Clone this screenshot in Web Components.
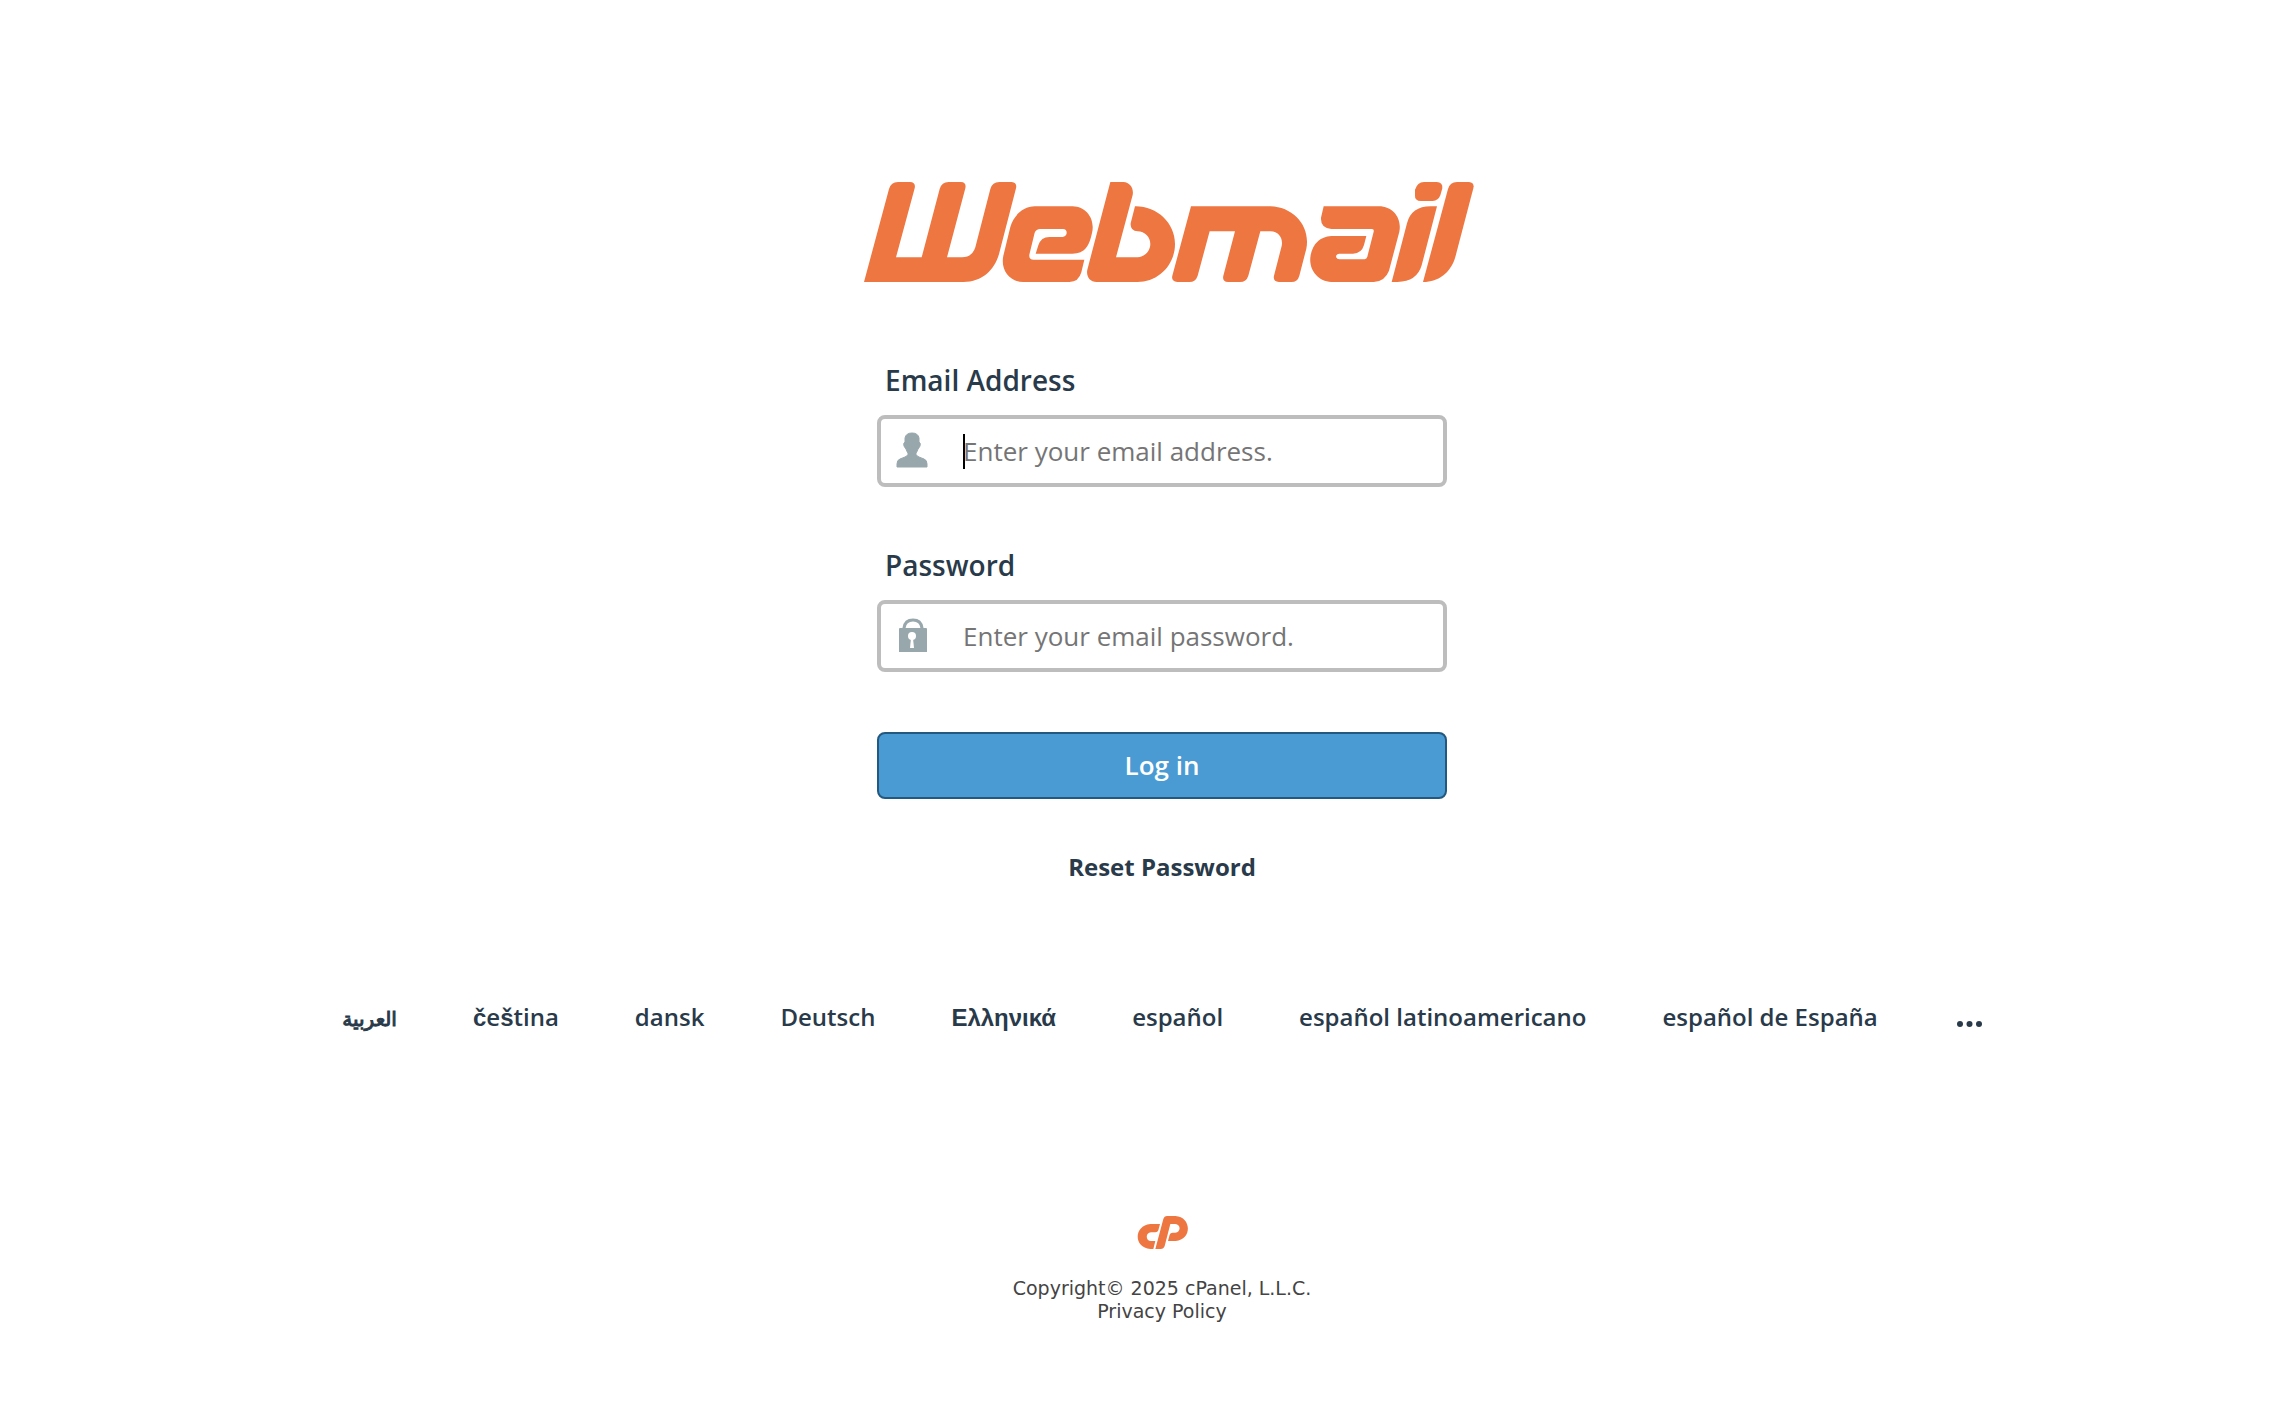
<!DOCTYPE html>
<html lang="en">
<head>
<meta charset="utf-8">
<title>Webmail Login</title>
<style>
body{margin:0;background:#fff;color:#293a4a;font-family:"Open Sans","Liberation Sans",sans-serif}
</style>
</head>
<body>
<webmail-login></webmail-login>
<script>
const define=(name,html,setup)=>customElements.define(name,class extends HTMLElement{
  connectedCallback(){
    if(this.shadowRoot)return;
    this.attachShadow({mode:'open'}).innerHTML=html;
    if(setup)setup(this,this.shadowRoot);
  }
});

define('webmail-logo',`
<style>:host{display:block}svg{display:block;width:610px;height:100px}</style>
<svg viewBox="42 36 1830 300" role="img" aria-label="Webmail" fill="#ee7641">
<path d="M42 336L117 57Q123 36 144 36H180Q198 37 194 55L138 262H215L269 57Q275 36 296 36H333Q350 37 346 55L291 262H336Q367 261 376 232L421 57Q427 36 448 36H485Q502 38 498 55L448 248C436 297 398 336 340 336Z"/>
<path d="M555 109H668C710 110 736 148 726 189C718 226 706 251 667 251H557L565 226Q573 201 598 201H638Q648 200 650 190Q651 178 639 177H570Q559 177 554 188L538 254Q536 269 551 269H703L694 307Q686 336 658 336H520C478 336 451 300 460 257L481 171C491 137 519 109 555 109Z"/>
<path d="M781 36H820C840 37 852 55 848 75L798 262H863C883 261 901 244 901 222C901 201 884 184 863 184Q840 182 842 160L855 109C921 108 975 159 975 222C975 285 925 336 862 336H740C719 336 708 319 712 299Z"/>
<path d="M1023 109H1261C1332 111 1382 170 1369 236L1348 317Q1343 336 1324 336H1287Q1268 335 1272 317L1295 228C1300 205 1286 184 1262 184H1231L1195 317Q1189 336 1170 336H1134Q1116 335 1120 317L1155 184H1079L1043 317Q1037 336 1018 336H982Q963 334 967 317Z"/>
<path d="M1421 109H1587C1629 109 1656 145 1648 185L1617 302Q1605 334 1571 336H1444C1402 334 1374 297 1382 255Q1393 202 1444 198H1549L1542 225Q1535 250 1509 251H1467Q1458 252 1458 261Q1461 268 1468 268H1544Q1550 267 1552 260L1571 185Q1573 178 1566 177H1444Q1411 175 1413 143Z"/>
<path d="M1695 59Q1702 37 1722 36H1760Q1779 37 1777 55L1771 76Q1765 92 1748 93H1713Q1694 92 1695 77Z"/>
<path d="M1761 109L1715 286Q1701 335 1642 336H1625L1671 160Q1684 109 1742 109Z"/>
<path d="M1719 336L1794 57Q1800 36 1821 36H1857Q1874 38 1870 55L1816 261C1803 307 1766 336 1719 336Z"/>
</svg>`);

define('cpanel-mark',`
<style>:host{display:block}svg{display:block;width:52px;height:33px}</style>
<svg viewBox="408 48 156 99" role="img" aria-label="cPanel" fill="#ee7641">
<path d="M451 72H480L475 91Q473 97 466 97H453C436 98 436 122 453 123H466L460 147H451C399 143 402 76 451 72Z"/>
<path d="M466 147L490 57Q493 48 501 48H526C576 51 576 120 527 123H504L509 104Q511 98 518 98H526C543 97 543 73 526 72H511L494 138Q491 147 482 147Z"/>
</svg>`);

define('login-field',`
<style>
:host{display:block}
label{display:block;padding-left:8px;font-size:28px;line-height:36px;font-weight:600}
.box{display:flex;align-items:center;box-sizing:border-box;height:72px;margin-top:17px;border:4px solid #bdbdbd;border-radius:8px;background:#fff}
slot{display:block;flex:none;width:82px}
.caret{display:none;flex:none;width:2px;height:35px;margin-right:-2px;background:#000}
:host([focused]) .caret{display:block}
input{flex:1;min-width:0;height:100%;box-sizing:border-box;border:0;padding:0;outline:0;background:none;font:26px "Open Sans",sans-serif;color:#000;caret-color:transparent}
input::placeholder{color:#757575;opacity:1}
</style>
<label for="field"></label>
<div class="box"><slot></slot><span class="caret"></span><input id="field"></div>`,(host,root)=>{
  root.querySelector('label').textContent=host.getAttribute('label');
  const input=root.querySelector('input');
  input.type=host.getAttribute('type');
  input.placeholder=host.getAttribute('placeholder');
  input.addEventListener('input',()=>{input.style.caretColor='#000';host.removeAttribute('focused')});
  if(host.hasAttribute('focused'))input.focus();
});

define('language-list',`
<style>
:host{display:block}
ul{display:flex;justify-content:center;align-items:center;gap:76px;list-style:none;margin:0;padding:0;white-space:nowrap}
a,button{color:inherit;text-decoration:none;font-size:24px;line-height:34px;font-weight:600}
a{display:block;height:34px}
b{font-family:"Liberation Sans",sans-serif;font-weight:700}
.ar{font-family:"DejaVu Sans",sans-serif;font-weight:400;font-size:20px;-webkit-text-stroke:1px currentColor}
button{display:block;border:0;background:none;padding:0;height:34px}
svg{display:block;width:28px;height:34px}
</style>
<ul>
<li><a href="#" lang="ar"><span class="ar">العربية</span></a></li>
<li><a href="#"><b>č</b>e<b>š</b>tina</a></li>
<li><a href="#">dansk</a></li>
<li><a href="#">Deutsch</a></li>
<li><a href="#"><b>Ελληνικά</b></a></li>
<li><a href="#">español</a></li>
<li><a href="#">español latinoamericano</a></li>
<li><a href="#">español de España</a></li>
<li><button type="button" aria-label="More languages"><svg viewBox="0 0 28 34" fill="currentColor"><circle cx="6" cy="24" r="3"/><circle cx="15.500" cy="24" r="3"/><circle cx="25" cy="24" r="3"/></svg></button></li>
</ul>`);

define('webmail-login',`
<style>
:host{display:block;box-sizing:border-box;padding:182px 0 80px 52px}
main{width:570px;margin:0 auto}
webmail-logo{margin-left:-13px;margin-bottom:80px}
login-field{margin-bottom:60px}
login-field svg{display:block;width:32px;height:40px;margin-left:15px}
.login{display:block;width:100%;height:67px;box-sizing:border-box;padding:0 0 2px;border:2px solid #23587f;border-radius:8px;background:#4a9ad3;color:#fff;font:600 26px "Open Sans",sans-serif}
.reset{display:block;margin-top:51px;text-align:center;color:inherit;text-decoration:none;font-size:24px;line-height:34px;font-weight:700}
language-list{margin-top:116px}
footer{display:flex;flex-direction:column;align-items:center;margin-top:182px;color:#444;font:19px/23px "DejaVu Sans",sans-serif}
cpanel-mark{margin-bottom:28px}
footer a{color:inherit;text-decoration:none}
</style>
<main>
<webmail-logo></webmail-logo>
<form>
<login-field label="Email Address" type="text" placeholder="Enter your email address." focused>
<svg viewBox="0 0 32 40" fill="#98a7ac"><path d="M9 7Q10 2 16 2T23 7V11Q25 12 24 15Q23 17 22 18Q21 21 20 22V24Q22 26 28 28Q31 29 31 33V36H1V33Q1 29 4 28Q10 26 12 24V22Q11 21 10 18Q9 17 8 15Q7 12 9 11Z" stroke="#98a7ac" stroke-width="1" stroke-linejoin="round"/></svg>
</login-field>
<login-field label="Password" type="password" placeholder="Enter your email password.">
<svg viewBox="0 0 32 40"><path d="M8 14V12Q9 4 17 4T26 12V14" fill="none" stroke="#98a7ac" stroke-width="3"/><path d="M4 12H30Q31 12 31 13V36H3V13Q3 12 4 12Z" fill="#98a7ac"/><circle cx="16" cy="20" r="4" fill="#fff"/><path d="M15 22H17L18 32H14Z" fill="#fff"/></svg>
</login-field>
<button class="login" type="submit">Log in</button>
</form>
<a class="reset" href="#">Reset Password</a>
</main>
<language-list></language-list>
<footer>
<cpanel-mark></cpanel-mark>
<span>Copyright© 2025 cPanel, L.L.C.</span>
<a href="#">Privacy Policy</a>
</footer>`);
</script>
</body>
</html>
